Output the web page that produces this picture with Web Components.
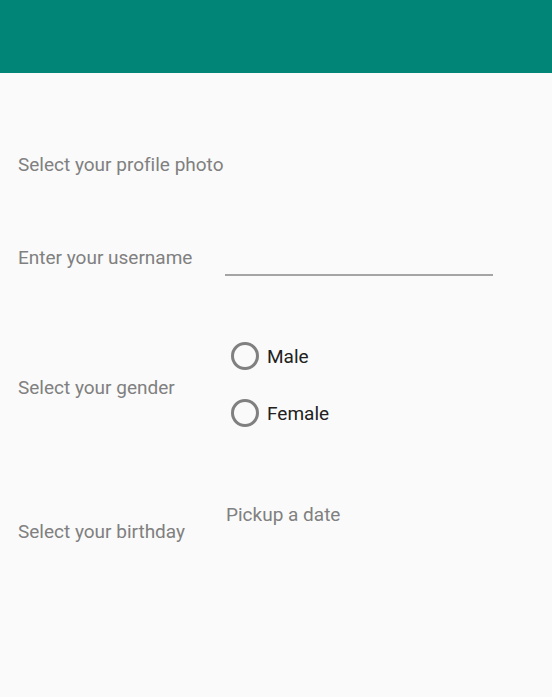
<!DOCTYPE html>
<html lang="en">
<head>
<meta charset="utf-8">
<meta name="viewport" content="width=device-width, initial-scale=1">
<title>Profile</title>
<style>
html, body { margin: 0; min-height: 100%; background: #fafafa; }
body { font-family: Roboto, "Liberation Sans", sans-serif; font-size: 19px; line-height: 24px; font-variant-ligatures: none; color: #808080; }
</style>
</head>
<body>
<profile-form></profile-form>
<script>
customElements.define('app-bar', class extends HTMLElement {
  constructor() {
    super();
    this.attachShadow({ mode: 'open' }).innerHTML = `
      <style>
        :host { display: block; }
        header { height: 73px; background: #008577; }
      </style>
      <header></header>`;
  }
});

customElements.define('radio-option', class extends HTMLElement {
  constructor() {
    super();
    this.attachShadow({ mode: 'open' }).innerHTML = `
      <style>
        :host { display: block; color: #212121; }
        label { display: flex; align-items: center; gap: 8px; }
        span { padding-top: 2px; }
        input { appearance: none; box-sizing: border-box; width: 28px; height: 28px; margin: 0; border: 3px solid #808080; border-radius: 50%; }
        input:checked { background: radial-gradient(#d81b60 45%, transparent 50%); border-color: #d81b60; }
      </style>
      <label><input type="radio" name="gender"><span><slot></slot></span></label>`;
    this.input = this.shadowRoot.querySelector('input');
    this.input.addEventListener('change', () => {
      for (const other of this.parentElement.querySelectorAll('radio-option'))
        if (other !== this) other.input.checked = false;
    });
  }
});

customElements.define('form-row', class extends HTMLElement {
  constructor() {
    super();
    this.attachShadow({ mode: 'open' }).innerHTML = `
      <style>
        :host { display: grid; grid-template-columns: 207px 1fr; align-items: center; }
      </style>
      <slot name="label"></slot><slot></slot>`;
  }
});

customElements.define('profile-form', class extends HTMLElement {
  constructor() {
    super();
    this.attachShadow({ mode: 'open' }).innerHTML = `
      <style>
        :host { display: block; }
        form { padding: 80px 59px 0 18px; }
        p { margin: 0; }
        .name { margin-top: 59px; }
        .name label { padding-top: 4px; }
        .name input { box-sizing: border-box; width: 100%; height: 40px; padding: 0 4px 8px; border: 0; border-bottom: 2px solid #a4a4a4; background: transparent; font: inherit; color: #212121; outline: 0; }
        .gender { margin-top: 66px; }
        .gender [slot=label] { padding-top: 6px; }
        .options { display: grid; gap: 29px; padding-left: 6px; }
        .birthday { margin-top: 76px; align-items: start; }
        .birthday [slot=label] { padding-top: 17px; }
        button { justify-self: start; padding: 0 0 0 1px; border: 0; background: none; font: inherit; color: inherit; }
      </style>
      <app-bar></app-bar>
      <form>
        <p>Select your profile photo</p>
        <form-row class="name">
          <label slot="label" for="username">Enter your username</label>
          <input id="username" type="text">
        </form-row>
        <form-row class="gender">
          <span slot="label" id="gender-label">Select your gender</span>
          <div class="options" role="radiogroup" aria-labelledby="gender-label">
            <radio-option>Male</radio-option>
            <radio-option>Female</radio-option>
          </div>
        </form-row>
        <form-row class="birthday">
          <label slot="label" for="birthday">Select your birthday</label>
          <button id="birthday" type="button">Pickup a date</button>
        </form-row>
      </form>`;
  }
});
</script>
</body>
</html>
